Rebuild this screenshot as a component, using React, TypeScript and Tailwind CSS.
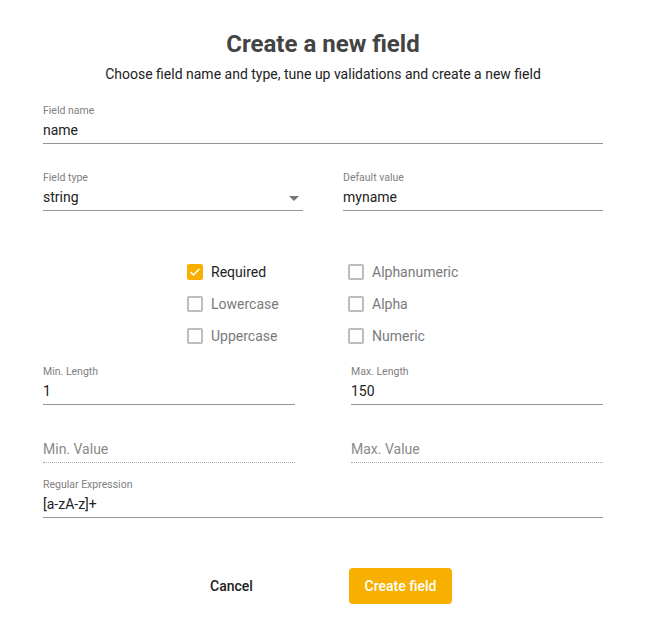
import React from 'react';

function Field({ label, value, className = '' }: { label: string; value: string; className?: string }) {
  return (
    <div className={`flex flex-col border-b border-[#949494] pb-[3px] ${className}`}>
      <span className="text-[10.5px] leading-[12px] text-[#808080]">{label}</span>
      <span className="mt-[3px] text-[14px] leading-[20px] text-[#222]">{value}</span>
    </div>
  );
}

function Placeholder({ text, className = '' }: { text: string; className?: string }) {
  return (
    <div className={`border-b border-dotted border-[#a8a8a8] pb-[3px] ${className}`}>
      <span className="block text-[14px] leading-[20px] text-[#8a8a8a]">{text}</span>
    </div>
  );
}

function Check({ label, checked = false }: { label: string; checked?: boolean }) {
  return (
    <div className="flex h-[32px] items-center gap-[8px]">
      {checked ? (
        <span className="flex h-[16px] w-[16px] items-center justify-center rounded-[2px] bg-[#f7b000]">
          <svg viewBox="0 0 16 16" className="h-[14px] w-[14px]">
            <path d="M3 8.2l3.2 3.2L13 4.6" fill="none" stroke="white" strokeWidth="1.8" />
          </svg>
        </span>
      ) : (
        <span className="h-[16px] w-[16px] rounded-[2px] border-2 border-[#bdbdbd]" />
      )}
      <span className={`text-[14px] ${checked ? 'text-[#222]' : 'text-[#7a7a7a]'}`}>{label}</span>
    </div>
  );
}

export default function App() {
  return (
    <div className="min-h-[622px] w-[657px] bg-white pl-[43px] pr-[54px] font-['Roboto',sans-serif]">
      <div className="pt-[28px] text-center">
        <h1 className="text-[24px] font-bold leading-[32px] text-[#444]">Create a new field</h1>
        <p className="mt-[4px] text-[14px] leading-[20px] text-[#222]">
          Choose field name and type, tune up validations and create a new field
        </p>
      </div>

      <Field label="Field name" value="name" className="mt-[21px]" />

      <div className="mt-[28px] flex gap-[40px]">
        <div className="relative w-[260px]">
          <Field label="Field type" value="string" />
          <svg viewBox="0 0 10 5" className="absolute right-[4px] top-[24px] h-[5px] w-[10px]">
            <path d="M0 0h10L5 5z" fill="#757575" />
          </svg>
        </div>
        <Field label="Default value" value="myname" className="w-[260px]" />
      </div>

      <div className="mt-[45px] ml-[144px] flex">
        <div className="w-[161px]">
          <Check label="Required" checked />
          <Check label="Lowercase" />
          <Check label="Uppercase" />
        </div>
        <div>
          <Check label="Alphanumeric" />
          <Check label="Alpha" />
          <Check label="Numeric" />
        </div>
      </div>

      <div className="mt-[14px] flex justify-between">
        <Field label="Min. Length" value="1" className="w-[252px]" />
        <Field label="Max. Length" value="150" className="w-[252px]" />
      </div>

      <div className="mt-[34px] flex justify-between">
        <Placeholder text="Min. Value" className="w-[252px]" />
        <Placeholder text="Max. Value" className="w-[252px]" />
      </div>

      <Field label="Regular Expression" value="[a-zA-z]+" className="mt-[16px]" />

      <div className="mt-[50px] flex pl-[137px]">
        <button className="h-[36px] w-[103px] rounded-[4px] text-[14px] font-medium text-[#222]">Cancel</button>
        <button className="ml-[66px] h-[36px] w-[103px] rounded-[4px] bg-[#f7b000] text-[14px] font-medium text-white">
          Create field
        </button>
      </div>
    </div>
  );
}
